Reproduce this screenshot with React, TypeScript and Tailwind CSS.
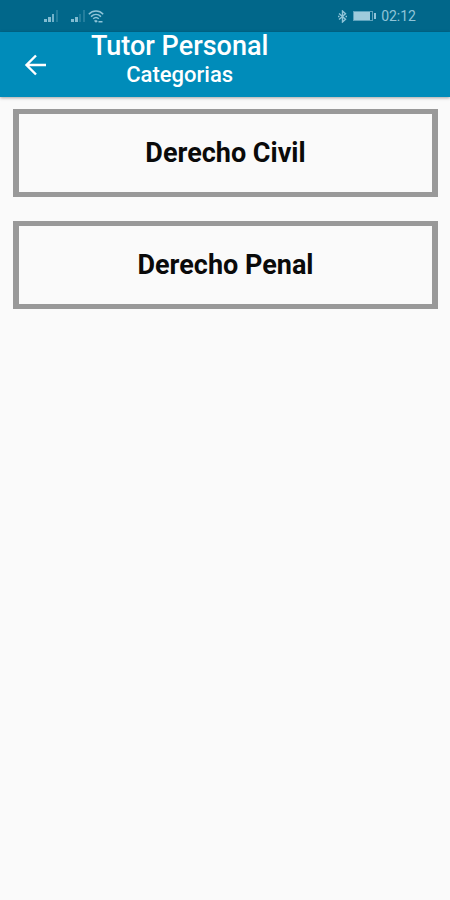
import type { ReactNode } from 'react'

type Category = {
  id: string
  name: string
}

const categories: Category[] = [
  { id: 'civil', name: 'Derecho Civil' },
  { id: 'penal', name: 'Derecho Penal' },
]

function SignalIcon({ level }: { level: number }) {
  return (
    <svg width="15" height="12" viewBox="0 0 15 12" fill="#8fc4d8">
      <rect x="0" y="9" width="3" height="3" opacity={level > 0 ? 0.9 : 0.25} />
      <rect x="4" y="7" width="3" height="5" opacity={level > 1 ? 0.9 : 0.25} />
      <rect x="8" y="4" width="2" height="8" opacity={level > 2 ? 0.8 : 0.25} />
      <rect x="12" y="0" width="2" height="12" opacity="0.25" />
    </svg>
  )
}

function WifiIcon() {
  return (
    <svg width="16" height="13" viewBox="0 0 16 13" fill="none" stroke="#8fc4d8" strokeWidth="1.5">
      <path d="M0.8 4.2C4.8 0 11.2 0 15.2 4.2" />
      <path d="M3 6.6c3-2.8 7-2.8 10 0" />
      <path d="M5.2 8.8c1.6-1.5 4-1.5 5.6 0" />
      <path d="M6.6 10.4l1.4 1.4 1.2-1.2M10.5 11.8h4" />
    </svg>
  )
}

function BluetoothIcon() {
  return (
    <svg width="9" height="13" viewBox="0 0 9 13" fill="none" stroke="#8fc4d8" strokeWidth="1.4">
      <path d="M1 3.5l6.5 5.8-3 2.7V1l3 2.7L1 9.5" />
      <path d="M0 6.5h1.5M7.5 6.5H9" />
    </svg>
  )
}

function BatteryIcon() {
  return (
    <svg width="24" height="10" viewBox="0 0 24 10">
      <rect x="0.5" y="0.5" width="19" height="9" fill="none" stroke="#5fa3bd" />
      <rect x="1" y="1" width="16" height="8" fill="#9fcbdc" />
      <rect x="21" y="2" width="2" height="6" fill="#8fc4d8" />
    </svg>
  )
}

function CategoryButton({ children }: { children: ReactNode }) {
  return (
    <button
      type="button"
      className="flex h-22 w-full items-center justify-center border-x-6 border-y-5 border-[#999999] text-[27px] leading-8 font-bold text-[#0a0a0a]"
    >
      {children}
    </button>
  )
}

export default function App() {
  return (
    <div className="min-h-screen bg-[#fafafa] font-['Roboto',sans-serif]">
      {/* STATUS BAR */}
      <div className="flex h-8 items-center bg-[#01678a] pr-[34px] pl-11 text-[#8fc4d8]">
        <SignalIcon level={3} />
        <div className="ml-3 flex items-center gap-0.5">
          <SignalIcon level={2} />
          <WifiIcon />
        </div>
        <div className="ml-auto flex items-center gap-1">
          <BluetoothIcon />
          <div className="flex items-center gap-1 pl-0.5">
            <BatteryIcon />
            <span className="text-[14px] leading-4">02:12</span>
          </div>
        </div>
      </div>

      {/* APP BAR */}
      <header className="flex h-[65px] items-center bg-[#008cba] text-white shadow-[0_1px_3px_rgba(0,0,0,0.35)]">
        <button type="button" aria-label="Volver" className="ml-6 flex size-6 items-center">
          <svg width="24" height="24" viewBox="0 0 24 24" fill="none" stroke="currentColor" strokeWidth="2.4">
            <path d="M22 12H3M12 2.5L2.5 12l9.5 9.5" />
          </svg>
        </button>
        <div className="ml-[43px] flex flex-col self-start text-center font-medium">
          <h1 className="text-[27px] leading-[29px]">Tutor Personal</h1>
          <h2 className="text-[22px] leading-7">Categorias</h2>
        </div>
      </header>

      {/* CATEGORIES */}
      <main className="flex flex-col gap-6 p-3 pl-[13px]">
        {categories.map((category) => (
          <CategoryButton key={category.id}>{category.name}</CategoryButton>
        ))}
      </main>
    </div>
  )
}
